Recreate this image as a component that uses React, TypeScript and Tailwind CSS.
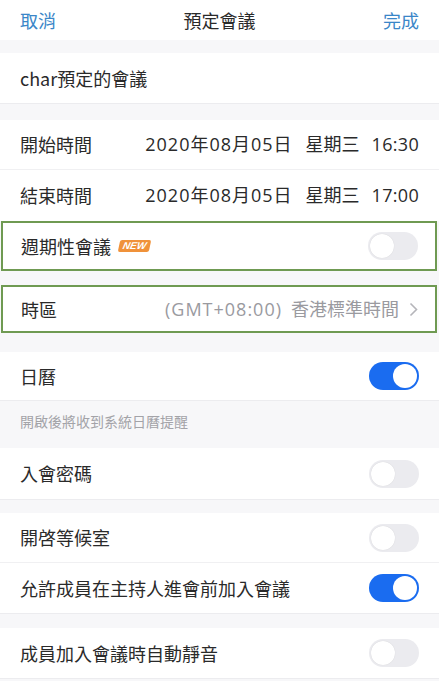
import React from "react";

const font = { fontFamily: '"Noto Sans CJK TC", "Noto Sans", sans-serif' };
const latin = { fontFamily: '"Open Sans", "Noto Sans CJK TC", sans-serif' };

function Toggle({ on }: { on?: boolean }) {
  return on ? (
    <div className="flex h-[28px] w-[50px] items-center justify-end rounded-full bg-[#1a6cf0] p-[2px]">
      <div className="h-[24px] w-[24px] rounded-full bg-white" />
    </div>
  ) : (
    <div className="flex h-[28px] w-[50px] items-center rounded-full bg-[#ebebef] p-[2px]">
      <div className="h-[24px] w-[24px] rounded-full bg-white shadow-[0_0_1px_rgba(0,0,0,0.15)]" />
    </div>
  );
}

function Row({
  label,
  children,
  className = "",
}: {
  label: React.ReactNode;
  children?: React.ReactNode;
  className?: string;
}) {
  return (
    <div className={`flex items-center justify-between bg-white px-5 ${className}`}>
      <div className="flex items-center text-[18px] text-[#2a2a2a]">{label}</div>
      {children}
    </div>
  );
}

function DateValue({ time }: { time: string }) {
  return (
    <div className="flex items-center text-[18px] text-[#2a2a2a]" style={latin}>
      <span className="tracking-[1px]">2020年08月05日</span>
      <span className="ml-[13px]">星期三</span>
      <span className="ml-[12px] tracking-[0.3px]">{time}</span>
    </div>
  );
}

export default function App() {
  return (
    <div className="h-[681px] w-[439px] overflow-hidden bg-[#f7f7f9]" style={font}>
      <div className="flex h-[40px] items-center justify-between bg-white px-5 text-[18px]">
        <span className="text-[#3a86c8]">取消</span>
        <span className="text-[#2a2a2a]">預定會議</span>
        <span className="text-[#3a86c8]">完成</span>
      </div>
      <div className="h-[13px]" />
      <Row label="char預定的會議" className="h-[51px] border-b border-[#ececef]" />
      <div className="h-[16px]" />
      <Row label="開始時間" className="h-[50px] border-b border-[#f0f0f2]">
        <DateValue time="16:30" />
      </Row>
      <Row label="結束時間" className="h-[50px]">
        <DateValue time="17:00" />
      </Row>
      <div className="h-[1px] bg-white" />
      <div className="mr-[2px] ml-[1px] flex h-[50px] items-center justify-between border-2 border-[#6f9a52] bg-white pr-[17px] pl-[18px]">
        <div className="flex items-center text-[18px] text-[#2a2a2a]">
          週期性會議
          <span
            className="ml-[8px] -skew-x-12 rounded-[2px] bg-[#f0923a] px-[4px] text-[10px] leading-[12px] font-bold italic text-white"
            style={{ fontFamily: '"Liberation Sans", sans-serif' }}
          >
            NEW
          </span>
        </div>
        <Toggle />
      </div>
      <div className="h-[14px]" />
      <div className="mr-[2px] ml-[1px] flex h-[48px] items-center justify-between border-2 border-[#6f9a52] bg-white pr-[17px] pl-[18px]">
        <span className="text-[18px] text-[#2a2a2a]">時區</span>
        <div className="flex items-center text-[18px] text-[#9a9a9f]" style={latin}>
          <span className="tracking-[1px]">(GMT+08:00)</span>
          <span className="ml-[9px]">香港標準時間</span>
          <svg className="ml-[10px]" width="9" height="15" viewBox="0 0 9 15" fill="none">
            <path d="M1.5 1.5 L7.5 7.5 L1.5 13.5" stroke="#b5b5ba" strokeWidth="1.6" />
          </svg>
        </div>
      </div>
      <div className="h-[19px]" />
      <Row label="日曆" className="h-[49px] border-b border-[#ececef]">
        <Toggle on />
      </Row>
      <div className="flex h-[47px] items-center px-5 pb-[6px] text-[14px] text-[#a3a3a8]">開啟後將收到系統日曆提醒</div>
      <Row label="入會密碼" className="h-[52px] border-b border-[#ececef]">
        <Toggle />
      </Row>
      <div className="h-[13px]" />
      <Row label="開啓等候室" className="h-[50px] border-b border-[#f0f0f2]">
        <Toggle />
      </Row>
      <Row label="允許成員在主持人進會前加入會議" className="h-[51px] border-b border-[#ececef]">
        <Toggle on />
      </Row>
      <div className="h-[14px]" />
      <Row label="成員加入會議時自動靜音" className="h-[51px] border-b border-[#ececef]">
        <Toggle />
      </Row>
    </div>
  );
}
